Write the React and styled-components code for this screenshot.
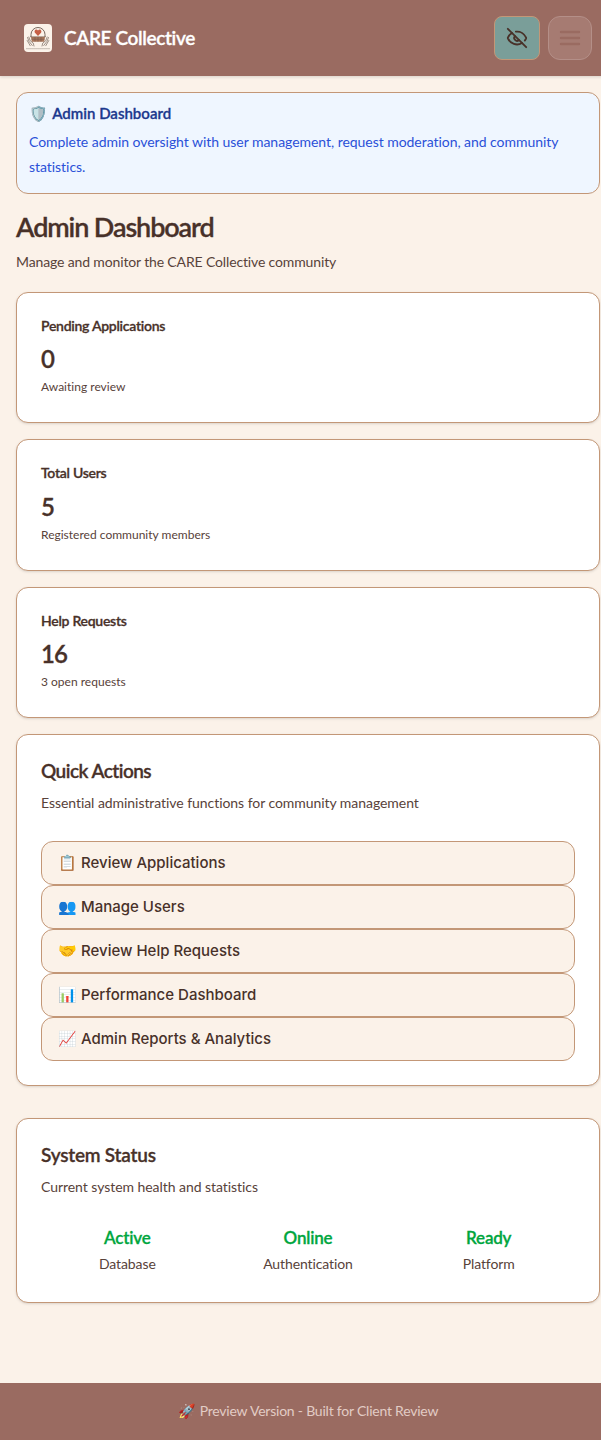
import React from 'react';
import styled, { createGlobalStyle } from 'styled-components';
import { EyeOff } from 'lucide-react';

const GlobalStyle = createGlobalStyle`
  *, *::before, *::after { box-sizing: border-box; }
  html { overflow: hidden; }
  body {
    margin: 0;
    min-width: 616px;
    background: #fbf2e9;
    color: #483129;
    font-family: Lato, 'Noto Sans', sans-serif;
    font-variant-ligatures: none;
  }
  h1, h2, h3, p { margin: 0; }
`;

const Page = styled.div`
  width: 616px;
  min-height: 1440px;
  display: flex;
  flex-direction: column;
`;

const Header = styled.header`
  display: flex;
  align-items: center;
  justify-content: space-between;
  height: 76px;
  padding: 0 24px;
  background: #9a6b61;
  box-shadow: 0 1px 3px rgba(0, 0, 0, 0.14);
`;

const Brand = styled.div`
  display: flex;
  align-items: center;
  gap: 12px;
`;

const LogoTile = styled.div`
  width: 28px;
  height: 28px;
  border-radius: 4px;
  background: #fbf2e9;
  overflow: hidden;
  svg { display: block; }
`;

const Txt = styled.span`
  display: block;
  white-space: nowrap;
  font-size: ${(p) => p.$size}px;
  line-height: ${(p) => p.$lh}px;
  font-weight: ${(p) => p.$weight || 400};
  -webkit-text-stroke: ${(p) => (p.$weight ? '0.3px currentColor' : '0')};
  letter-spacing: ${(p) => p.$track || 0}px;
  color: ${(p) => p.$color || 'inherit'};
  margin-top: ${(p) => p.$mt || 0}px;
`;

const Emoji = styled.span`
  margin-right: ${(p) => p.$gap}px;
`;

const HeaderActions = styled.div`
  display: flex;
  gap: 8px;
`;

const IconButton = styled.button`
  display: flex;
  align-items: center;
  justify-content: center;
  width: ${(p) => (p.$muted ? 44 : 46)}px;
  height: 44px;
  padding: 0;
  border: 1px solid ${(p) => (p.$muted ? '#b48f88' : '#c39777')};
  border-radius: ${(p) => (p.$muted ? 12 : 8)}px;
  background: ${(p) => (p.$muted ? '#a67b72' : '#7a9e99')};
  color: ${(p) => (p.$muted ? '#9a6b61' : '#483129')};
`;

const Main = styled.main`
  flex: 1;
  padding: 16px 16px 0;
`;

const Banner = styled.section`
  height: 102px;
  padding: 10px 12px;
  border: 1px solid #c39777;
  border-radius: 12px;
  background: #eff6ff;
`;

const PageHeading = styled.div`
  padding: 15px 0 18px;
`;

const Stack = styled.div`
  display: flex;
  flex-direction: column;
  gap: 16px;
`;

const Card = styled.section`
  height: ${(p) => p.$height}px;
  padding: 23px 24px;
  margin-top: ${(p) => p.$mt || 0}px;
  border: 1px solid #c39777;
  border-radius: 12px;
  background: #fff;
  box-shadow: 0 1px 3px rgba(0, 0, 0, 0.1), 0 1px 2px -1px rgba(0, 0, 0, 0.1);
`;

const ActionList = styled.div`
  display: flex;
  flex-direction: column;
  margin-top: 26px;
`;

const ActionButton = styled.button`
  display: flex;
  align-items: center;
  height: 44px;
  padding: 0 16px;
  border: 1px solid #c39777;
  border-radius: 12px;
  background: #fbf2e9;
  color: #483129;
  font: 500 15px/22px Inter, sans-serif;
  text-align: left;
`;

const StatusGrid = styled.div`
  display: grid;
  grid-template-columns: repeat(3, 1fr);
  gap: 8px;
  margin-top: 27px;
  text-align: center;
`;

const Footer = styled.footer`
  display: flex;
  align-items: center;
  justify-content: center;
  height: 57px;
  padding-bottom: 2px;
  background: #9a6b61;
`;

const Logo = () => (
  <svg width="28" height="28" viewBox="0 0 28 28" fill="none">
    <path d="M7 13V10.500a7 7 0 0 1 14 0V13" stroke="#75665c" strokeWidth="1" />
    <path d="M14 12l-2.800-2.900c-1.900-2.200 1-5.300 2.800-2.700 1.800-2.600 4.700.5 2.800 2.700z" fill="#c65f45" />
    <path d="M7 13h14l-.8 4.700H7.800z" fill="#a8765a" />
    <path d="M6.200 12.700h15.600M7.500 15.200h13M11 13v4.500M14 13v4.500M17 13v4.500" stroke="#75594b" strokeWidth=".6" />
    <path d="M3.500 13.500l1.500 3.800 3.300 4.200M4.800 13l1.400 3.700 3 2.300.8 3M3.200 16.500l3 5.200M24.500 13.500l-1.500 3.800-3.300 4.200M23.200 13l-1.400 3.700-3 2.300-.8 3M24.800 16.500l-3 5.200" stroke="#85776d" strokeWidth=".8" strokeLinecap="round" />
    <path d="M2.200 24.700h23.600" stroke="#a89e96" strokeWidth=".8" strokeDasharray="1.600 .4" />
  </svg>
);

const MenuIcon = () => (
  <svg width="24" height="24" viewBox="0 0 24 24" stroke="currentColor" strokeWidth="2.400" strokeLinecap="round">
    <path d="M3 6h18M3 12h18M3 18h18" />
  </svg>
);

const stats = [
  { title: 'Pending Applications', value: '0', note: 'Awaiting review' },
  { title: 'Total Users', value: '5', note: 'Registered community members' },
  { title: 'Help Requests', value: '16', note: '3 open requests' },
];

const actions = [
  '📋 Review Applications',
  '👥 Manage Users',
  '🤝 Review Help Requests',
  '📊 Performance Dashboard',
  '📈 Admin Reports & Analytics',
];

const statuses = [
  ['Active', 'Database'],
  ['Online', 'Authentication'],
  ['Ready', 'Platform'],
];

export default function App() {
  return (
    <Page>
      <GlobalStyle />
      <Header>
        <Brand>
          <LogoTile><Logo /></LogoTile>
          <Txt $size={19} $lh={28} $weight={600} $track={-0.37} $color="#fff">CARE Collective</Txt>
        </Brand>
        <HeaderActions>
          <IconButton aria-label="Hide"><EyeOff size={22} /></IconButton>
          <IconButton $muted aria-label="Menu"><MenuIcon /></IconButton>
        </HeaderActions>
      </Header>
      <Main>
        <Banner>
          <Txt $size={15} $lh={20} $weight={600} $color="#1c398e"><Emoji $gap={1}>🛡️</Emoji> Admin Dashboard</Txt>
          <Txt $size={14} $lh={25} $mt={6} $track={-0.045} $color="#2a50d8">
            Complete admin oversight with user management, request moderation, and community<br />statistics.
          </Txt>
        </Banner>
        <PageHeading>
          <Txt as="h1" $size={27} $lh={36} $weight={600} $track={-1.1}>Admin Dashboard</Txt>
          <Txt as="p" $size={14} $lh={24} $mt={5} $track={-0.14} $color="#58423a">Manage and monitor the CARE Collective community</Txt>
        </PageHeading>
        <Stack>
          {stats.map((s) => (
            <Card key={s.title} $height={131.33}>
              <Txt as="h3" $size={14} $lh={20} $weight={600} $track={-0.27}>{s.title}</Txt>
              <Txt $size={24} $lh={32} $mt={7.3} $weight={600} $track={-0.9}>{s.value}</Txt>
              <Txt as="p" $size={12} $lh={20} $mt={2} $track={0.01} $color="#58423a">{s.note}</Txt>
            </Card>
          ))}
          <Card $height={352}>
            <Txt as="h2" $size={19} $lh={24} $mt={1} $weight={600} $track={-0.53}>Quick Actions</Txt>
            <Txt as="p" $size={14} $lh={24} $mt={8} $track={-0.055} $color="#58423a">Essential administrative functions for community management</Txt>
            <ActionList>
              {actions.map((a) => <ActionButton key={a}>{a}</ActionButton>)}
            </ActionList>
          </Card>
          <Card $height={185} $mt={16}>
            <Txt as="h2" $size={19} $lh={24} $mt={1} $weight={600} $track={-0.22}>System Status</Txt>
            <Txt as="p" $size={14} $lh={24} $mt={8} $track={-0.05} $color="#58423a">Current system health and statistics</Txt>
            <StatusGrid>
              {statuses.map(([state, label]) => (
                <div key={label}>
                  <Txt $size={17} $lh={24} $weight={600} $track={-0.2} $color="#00a63e">{state}</Txt>
                  <Txt $size={14} $lh={24} $mt={2} $track={-0.1} $color="#58423a">{label}</Txt>
                </div>
              ))}
            </StatusGrid>
          </Card>
        </Stack>
      </Main>
      <Footer>
        <Txt $size={14} $lh={24} $track={-0.22} $color="#e2ccc5"><Emoji $gap={1.8}>🚀</Emoji> Preview Version - Built for Client Review</Txt>
      </Footer>
    </Page>
  );
}
